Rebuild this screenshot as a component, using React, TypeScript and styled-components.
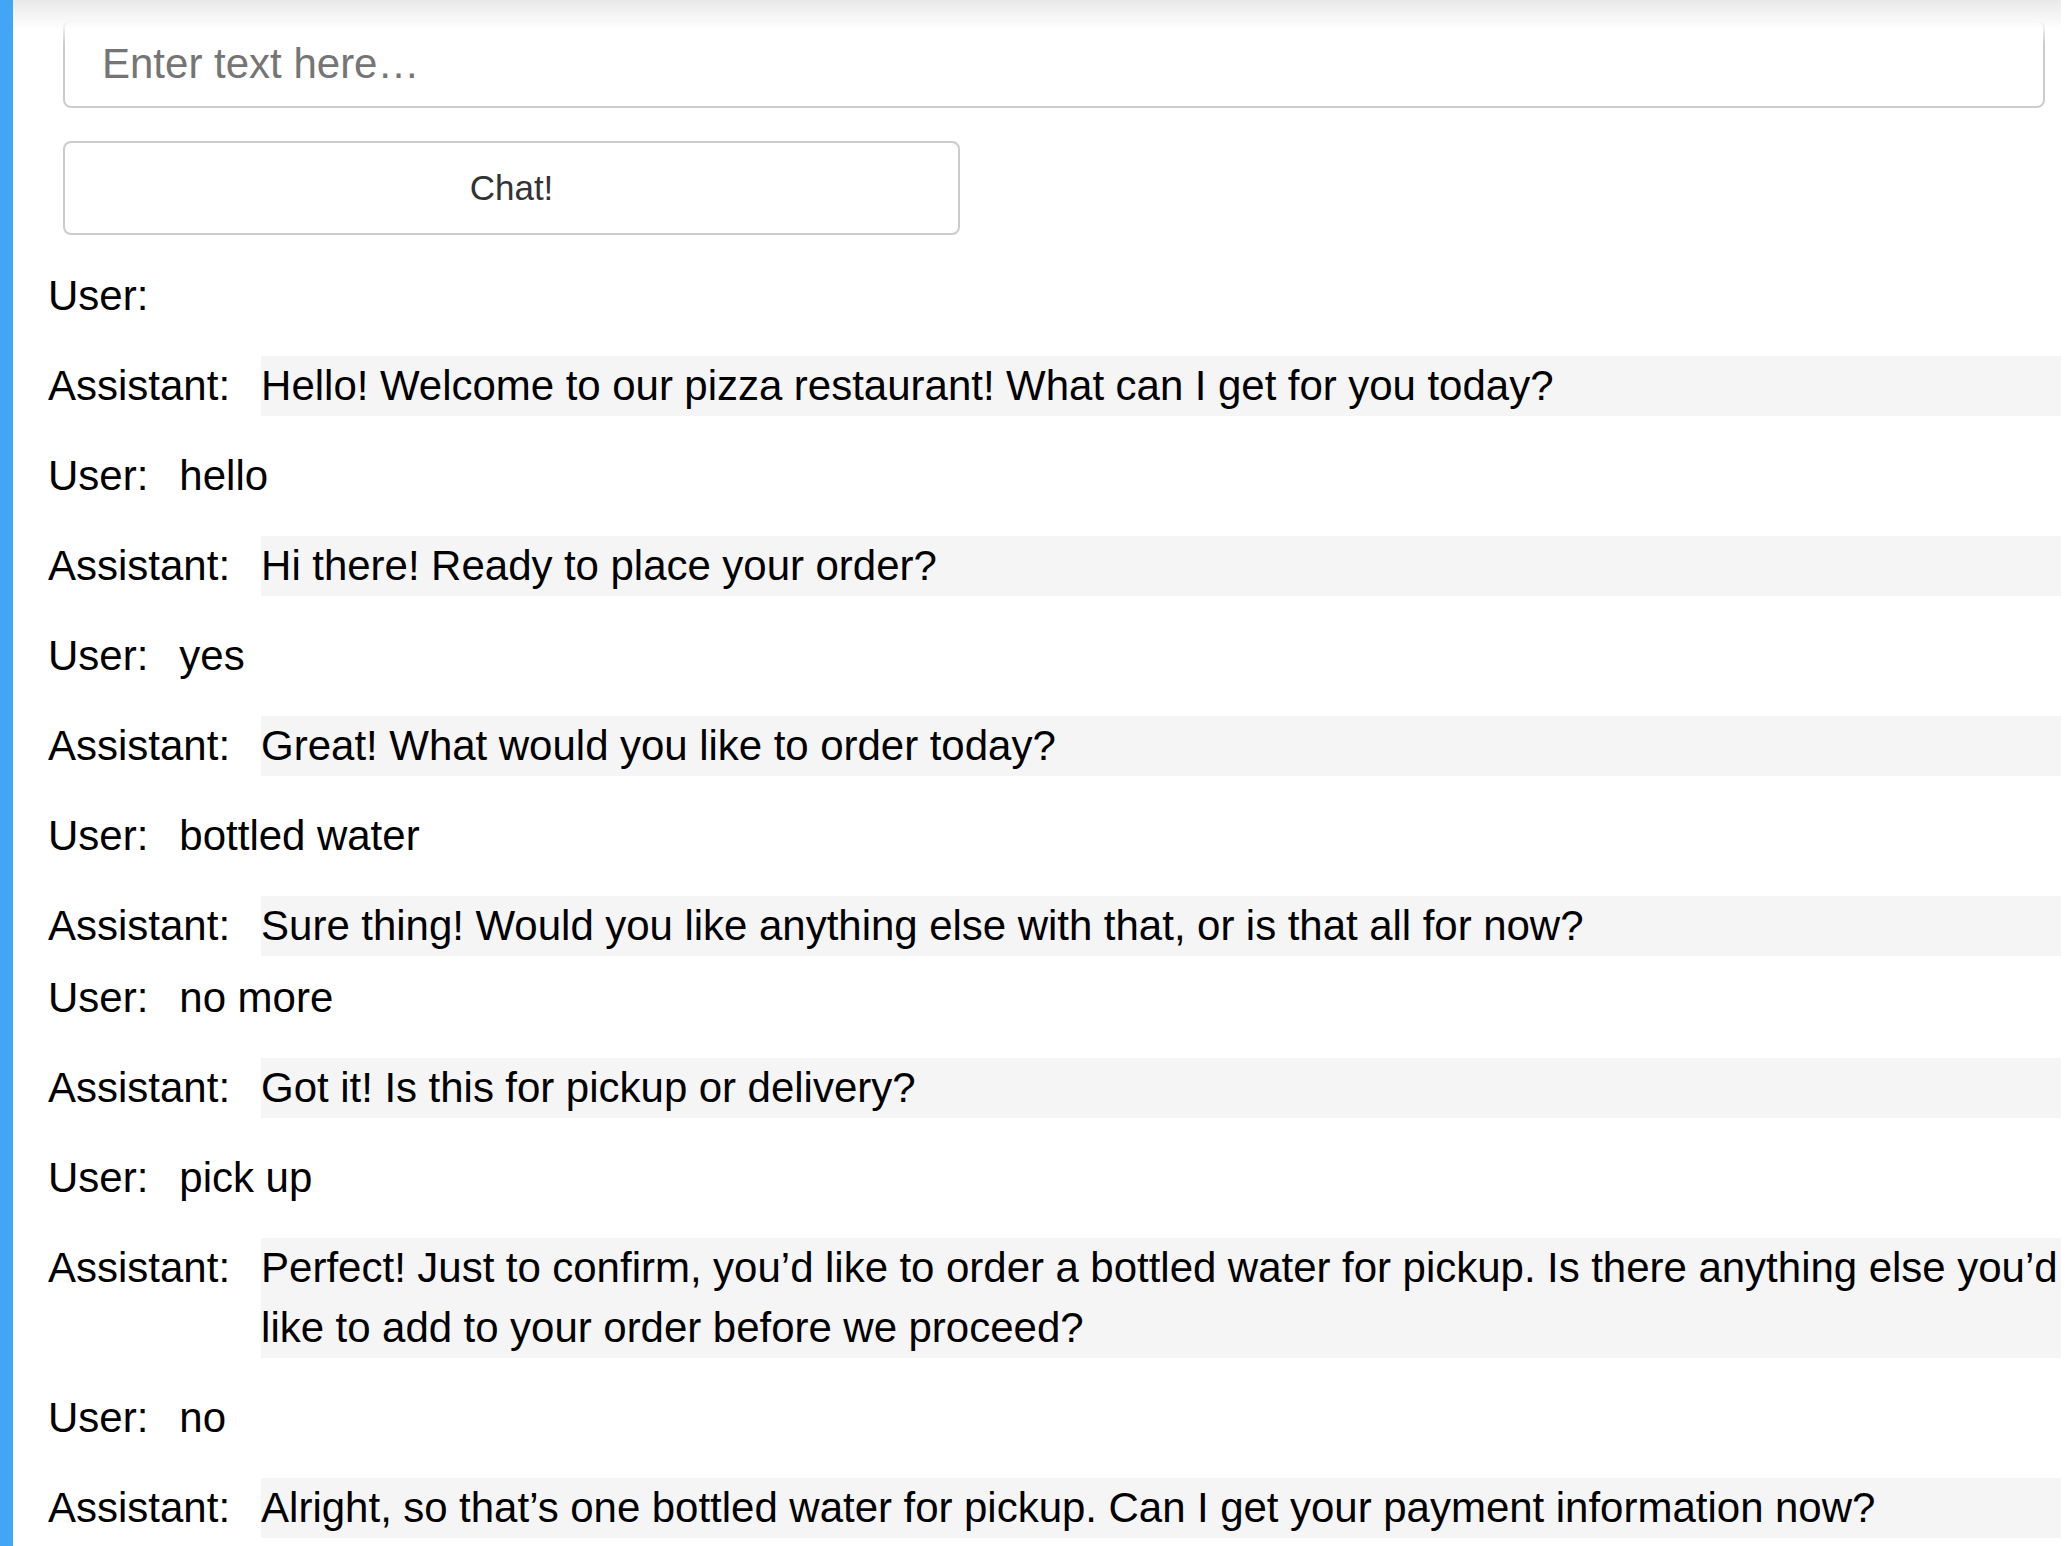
import styled, { createGlobalStyle } from "styled-components";

const GlobalStyle = createGlobalStyle`
  html, body {
    margin: 0;
    padding: 0;
    background: #fff;
  }
  body {
    font-family: "Liberation Sans", Helvetica, Arial, sans-serif;
    color: #000;
  }
  * {
    box-sizing: border-box;
  }
`;

const Page = styled.div`
  display: flex;
  min-height: 1546px;
  padding-right: 10px;
`;

const SideBar = styled.div`
  width: 13px;
  flex-shrink: 0;
  background: #42a5f5;
`;

const Main = styled.main`
  flex: 1;
  min-width: 0;
  padding-top: 20px;
`;

const HeaderShade = styled.div`
  position: fixed;
  top: 0;
  left: 13px;
  right: 10px;
  height: 44px;
  pointer-events: none;
  background: linear-gradient(
    #e9e9e9 0px,
    #f8f8f8 20px,
    rgba(255, 255, 255, 0.6) 30px,
    rgba(255, 255, 255, 0) 44px
  );
`;

const Form = styled.form`
  display: flex;
  flex-direction: column;
  align-items: flex-start;
  gap: 33px;
  margin: 0 16px 0 50px;
`;

const Input = styled.input`
  width: 100%;
  height: 88px;
  padding: 0 37px;
  border: 2px solid #cccccc;
  border-radius: 8px;
  font-family: inherit;
  font-size: 42px;
  color: #000;
  outline: none;

  &::placeholder {
    color: #757575;
  }
`;

const Button = styled.button`
  width: 897px;
  height: 94px;
  border: 2px solid #cccccc;
  border-radius: 8px;
  background: #fff;
  font-family: inherit;
  font-size: 35px;
  color: #333;
`;

const Log = styled.div`
  margin-top: 31px;
  padding-left: 35px;
`;

const Row = styled.div<{ $seam?: boolean }>`
  display: flex;
  align-items: flex-start;
  gap: 31px;
  font-size: 42px;
  line-height: 60px;
  min-height: 60px;
  word-spacing: -0.2px;
  margin-bottom: ${(p) => (p.$seam ? "12px" : "30px")};
`;

const Label = styled.span`
  white-space: nowrap;
  flex-shrink: 0;
`;

const Message = styled.span<{ $assistant?: boolean }>`
  flex: ${(p) => (p.$assistant ? 1 : "0 1 auto")};
  background: ${(p) => (p.$assistant ? "#f5f5f5" : "transparent")};
`;

interface IMessage {
  role: "User" | "Assistant";
  text: string;
  seam?: boolean;
}

const messages: IMessage[] = [
  { role: "User", text: "" },
  {
    role: "Assistant",
    text: "Hello! Welcome to our pizza restaurant! What can I get for you today?",
  },
  { role: "User", text: "hello" },
  { role: "Assistant", text: "Hi there! Ready to place your order?" },
  { role: "User", text: "yes" },
  { role: "Assistant", text: "Great! What would you like to order today?" },
  { role: "User", text: "bottled water" },
  {
    role: "Assistant",
    text: "Sure thing! Would you like anything else with that, or is that all for now?",
    seam: true,
  },
  { role: "User", text: "no more" },
  { role: "Assistant", text: "Got it! Is this for pickup or delivery?" },
  { role: "User", text: "pick up" },
  {
    role: "Assistant",
    text: "Perfect! Just to confirm, you\u2019d like to order a bottled water for pickup. Is there anything else you\u2019d like to add to your order before we proceed?",
  },
  { role: "User", text: "no" },
  {
    role: "Assistant",
    text: "Alright, so that\u2019s one bottled water for pickup. Can I get your payment information now?",
  },
];

export default function App() {
  return (
    <>
      <GlobalStyle />
      <Page>
        <SideBar />
        <Main>
          <Form onSubmit={(e) => e.preventDefault()}>
            <Input placeholder="Enter text here…" />
            <Button type="submit">Chat!</Button>
          </Form>
          <Log>
            {messages.map(({ role, text, seam }, i) => (
              <Row key={i} $seam={seam}>
                <Label>{role}:</Label>
                <Message $assistant={role === "Assistant"}>{text}</Message>
              </Row>
            ))}
          </Log>
        </Main>
      </Page>
      <HeaderShade />
    </>
  );
}
